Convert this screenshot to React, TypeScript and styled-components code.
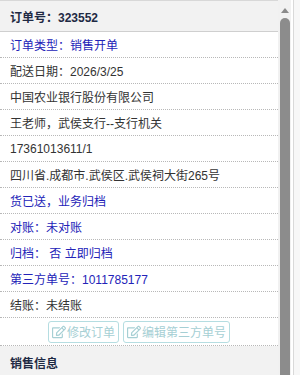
import React from 'react';
import styled, { createGlobalStyle } from 'styled-components';
import { FaRegEdit } from 'react-icons/fa';

const GlobalStyle = createGlobalStyle`
  html, body {
    margin: 0;
    padding: 0;
    background: #ffffff;
  }
  body {
    font-family: "Liberation Sans", "Noto Sans CJK SC", sans-serif;
    font-size: 12px;
  }
`;

const Frame = styled.div`
  display: flex;
  width: 300px;
  height: 375px;
  overflow: hidden;
  background: #ffffff;
`;

const Panel = styled.div`
  width: 278px;
  flex-shrink: 0;
  display: flex;
  flex-direction: column;
`;

const SectionHeader = styled.div<{ top?: boolean }>`
  height: 30px;
  display: flex;
  align-items: center;
  padding: 0 10px;
  background: #f2f2f2;
  border-top: 1px solid ${props => (props.top ? '#d8d8d8' : 'transparent')};
  border-bottom: 1px solid #cfcfcf;
  color: #1f2a44;
  font-weight: bold;
  font-size: 12px;
  flex-shrink: 0;
`;

const Row = styled.div<{ blue?: boolean }>`
  height: 25px;
  display: flex;
  align-items: center;
  padding: 0 10px;
  border-bottom: 1px dotted #b8b8b8;
  color: ${props => (props.blue ? '#2323b8' : '#333333')};
  white-space: nowrap;
  flex-shrink: 0;
`;

const ButtonRow = styled.div`
  height: 27px;
  display: flex;
  align-items: center;
  justify-content: center;
  gap: 4px;
  border-bottom: 1px dotted #b8b8b8;
  flex-shrink: 0;
`;

const ActionButton = styled.button`
  height: 22px;
  display: flex;
  align-items: center;
  gap: 1px;
  padding: 0 3px;
  background: #ffffff;
  border: 1px solid #b5dde1;
  border-radius: 3px;
  color: #a6cfd4;
  font-family: "Liberation Sans", "Noto Sans CJK SC", sans-serif;
  font-size: 12px;
  cursor: default;
  svg {
    width: 14px;
    height: 14px;
  }
`;

const ScrollTrack = styled.div`
  width: 13px;
  flex-shrink: 0;
  background: #f1f1f1;
  display: flex;
  flex-direction: column;
  align-items: center;
  padding-left: 2px;
  box-sizing: border-box;
`;

const ArrowUp = styled.div`
  width: 0;
  height: 0;
  margin-top: 8px;
  border-left: 4px solid transparent;
  border-right: 4px solid transparent;
  border-bottom: 5px solid #8a8a8a;
  margin-right: 2px;
`;

const Thumb = styled.div`
  width: 10px;
  flex: 1;
  margin-top: 5px;
  margin-right: 2px;
  background: #8c8c8c;
  border-radius: 5px 5px 0 0;
`;

const Gutter = styled.div`
  flex: 1;
  background: #f7f7f7;
  border-left: 1px solid #d9d9d9;
  margin-left: 2px;
`;

const rows: { text: string; blue?: boolean }[] = [
  { text: '订单类型：销售开单', blue: true },
  { text: '配送日期：2026/3/25' },
  { text: '中国农业银行股份有限公司' },
  { text: '王老师，武侯支行--支行机关' },
  { text: '17361013611/1' },
  { text: '四川省.成都市.武侯区.武侯祠大街265号' },
  { text: '货已送，业务归档', blue: true },
  { text: '对账：未对账', blue: true },
  { text: '归档： 否 立即归档', blue: true },
  { text: '第三方单号：1011785177', blue: true },
  { text: '结账：未结账' },
];

export default function App() {
  return (
    <>
      <GlobalStyle />
      <Frame>
        <Panel>
          <SectionHeader top>订单号：323552</SectionHeader>
          {rows.map(row => (
            <Row key={row.text} blue={row.blue}>{row.text}</Row>
          ))}
          <ButtonRow>
            <ActionButton><FaRegEdit />修改订单</ActionButton>
            <ActionButton><FaRegEdit />编辑第三方单号</ActionButton>
          </ButtonRow>
          <SectionHeader>销售信息</SectionHeader>
        </Panel>
        <ScrollTrack>
          <ArrowUp />
          <Thumb />
        </ScrollTrack>
        <Gutter />
      </Frame>
    </>
  );
}
